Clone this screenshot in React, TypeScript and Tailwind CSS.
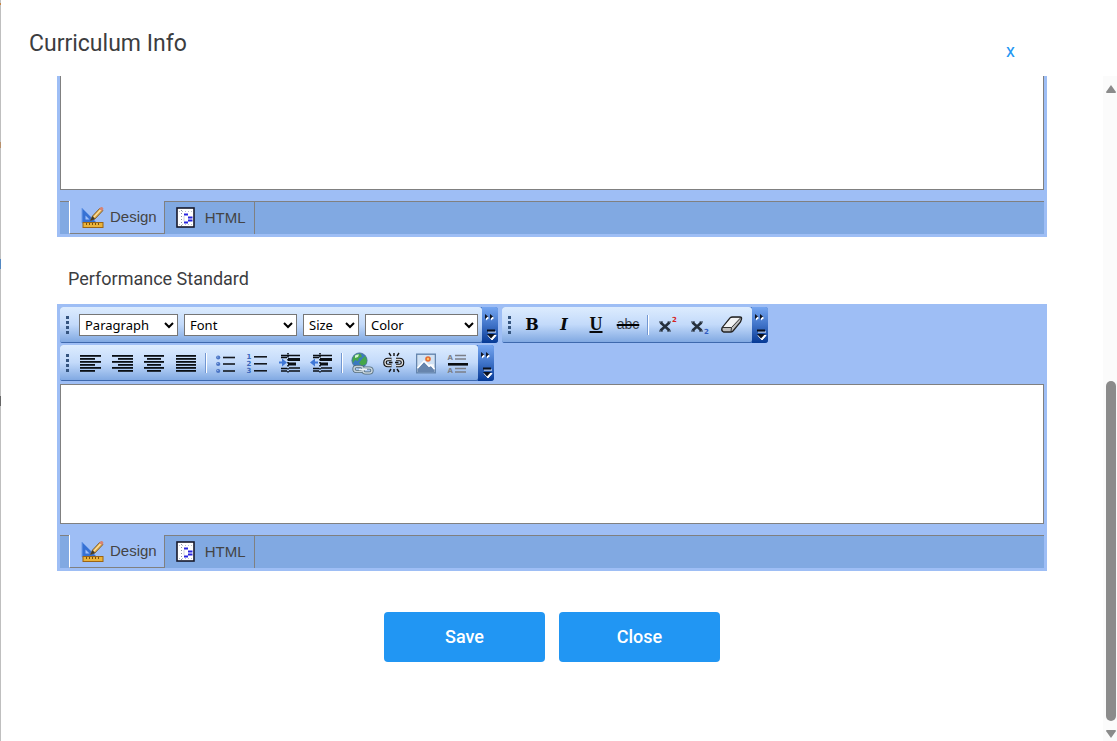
import { ReactNode } from 'react';

function Svg({ children, className = 'size-6' }: { children: ReactNode; className?: string }) {
  return (
    <svg viewBox="0 0 24 24" className={className} aria-hidden="true">
      {children}
    </svg>
  );
}

// x and width of each line, top to bottom
const alignLines: Record<string, number[][]> = {
  left: [[2, 21], [2, 15], [2, 21], [2, 15], [2, 21], [2, 15]],
  right: [[2, 21], [8, 15], [2, 21], [8, 15], [2, 21], [8, 15]],
  center: [[2, 20], [5, 14], [2, 20], [5, 14], [2, 20], [5, 14]],
  full: [[2, 20], [2, 20], [2, 20], [2, 20], [2, 20], [2, 20]],
};

function AlignIcon({ kind }: { kind: string }) {
  return (
    <Svg>
      {alignLines[kind].map(([x, w], i) => (
        <rect key={i} x={x} y={4 + i * 3} width={w} height={1.8} fill="#0a0f14" />
      ))}
    </Svg>
  );
}

function BulletIcon() {
  return (
    <Svg>
      {[6.5, 13, 20].map((y) => (
        <g key={y}>
          <circle cx="4.2" cy={y} r="2.1" fill="#4a74c4" />
          <circle cx="3.8" cy={y - 0.5} r="0.6" fill="#b8cff5" />
          <rect x="9" y={y - 0.8} width="12" height="1.6" fill="#15191f" />
        </g>
      ))}
    </Svg>
  );
}

function NumberIcon() {
  return (
    <Svg>
      {[5.5, 12.5, 19.5].map((y, i) => (
        <g key={y}>
          <text x="0.5" y={y + 2.5} fontFamily="DejaVu Sans" fontWeight="700" fontSize="7" fill="#3a66bb">
            {i + 1}
          </text>
          <rect x="8" y={y - 0.5} width="13" height="1.6" fill="#15191f" />
        </g>
      ))}
    </Svg>
  );
}

function IndentIcon({ out }: { out?: boolean }) {
  return (
    <Svg>
      <path d="M3 4.500H22M3 6.500H9M3 17.500H9M3 20H9M11 20H22M11 17H22" stroke="#0b0f14" strokeWidth="1.400" />
      <path d="M10 8.500H22M10 13H18" stroke="#0b0f14" strokeWidth="3" />
      <path d="M10 2V23" stroke="#0b0f14" strokeWidth="1.600" strokeDasharray="1.500 1.500" />
      {out ? (
        <path d="M0 11.500L5 7.500V10.500H8V12.500H5V15.500Z" fill="#3f77d6" />
      ) : (
        <path d="M9 11.500L4 7.500V10.500H1V12.500H4V15.500Z" fill="#3f77d6" />
      )}
    </Svg>
  );
}

function GlobeIcon() {
  return (
    <Svg>
      <circle cx="9.5" cy="9.5" r="7.6" fill="#3979bf" stroke="#456b8d" strokeWidth=".8" />
      <path d="M4 5Q7 2 11 3L12 6L9 7L8 10L5 9L3 12Q1.500 8 4 5ZM12 8L15 5Q18 9 16 13L12 15L9 12Z" fill="#45a64a" />
      <path d="M5 4.500Q7 3 9 3.500L8 6L5 7Z" fill="#d5f5d0" />
      <g fill="none" stroke="#526b79" strokeWidth="3.200">
        <rect x="4" y="15.500" width="9" height="5" rx="2.500" />
        <rect x="13" y="17" width="9" height="5" rx="2.500" />
      </g>
      <g fill="none" stroke="#c4d2dc" strokeWidth="1.500">
        <rect x="4" y="15.500" width="9" height="5" rx="2.500" />
        <rect x="13" y="17" width="9" height="5" rx="2.500" />
      </g>
      <path d="M9 18.500H17" stroke="#edf3f7" strokeWidth="1.500" />
    </Svg>
  );
}

function UnlinkIcon() {
  return (
    <Svg>
      <g fill="none" stroke="#111" strokeWidth="3.600">
        <path d="M9.500 8.500H6Q3 8.500 3 11.500T6 14.500H9.500M14 8.500H17.500Q20.500 8.500 20.500 11.500T17.500 14.500H14" />
      </g>
      <g fill="none" stroke="#ddd" strokeWidth="1.300">
        <path d="M9.500 8.500H6Q3 8.500 3 11.500T6 14.500H9.500M14 8.500H17.500Q20.500 8.500 20.500 11.500T17.500 14.500H14" />
      </g>
      <path
        d="M7 11.500H10.500M13 11.500H16.500M12 2V5M7 2L9 5M17 2L15 5M12 18V21M7 21L9 18M17 21L15 18"
        stroke="#111"
        strokeWidth="1.400"
      />
    </Svg>
  );
}

function ImageIcon() {
  return (
    <Svg>
      <rect x="2.700" y="3.200" width="18.600" height="18.600" fill="#edf4fb" stroke="#6485ae" strokeWidth="1.400" />
      <path d="M4 4H20V13L4 15Z" fill="#d0e2f5" />
      <path d="M3.500 21V18L10 11L15 16L17 15L20.500 19V21Z" fill="#6785ad" />
      <path d="M3.500 17L10 10L15 15L17 14L20.500 18" fill="none" stroke="#fff" strokeWidth="1.500" />
      <circle cx="14" cy="8" r="2.800" fill="#e56b34" />
      <circle cx="14" cy="8" r="1.200" fill="#ffc361" />
    </Svg>
  );
}

function RuleIcon() {
  return (
    <Svg>
      <rect x="2" y="12" width="20" height="2.600" fill="#0a0d10" />
      {[9, 22].map((y) => (
        <g key={y}>
          <text x="1.500" y={y} fontFamily="DejaVu Sans" fontWeight="700" fontSize="7" fill="#7b7f88">
            A
          </text>
          <path d={`M9 ${y - 4.5}H20M9 ${y - 1}H20`} stroke="#7b7f88" strokeWidth="1.400" />
        </g>
      ))}
    </Svg>
  );
}

function ScriptIcon({ sub }: { sub?: boolean }) {
  return (
    <Svg>
      <path d="M4.500 9.500L13.500 17.500M13.500 9.500L4.500 17.500" fill="none" stroke="#26303c" strokeWidth="2.600" />
      <path d="M3 9H7M11.500 9H15M3 18H7M11 18H15" stroke="#26303c" strokeWidth="1.200" />
      <text
        x="16"
        y={sub ? 21 : 9}
        fontFamily="DejaVu Sans"
        fontWeight="700"
        fontSize="7"
        fill={sub ? '#315bc0' : '#d52222'}
      >
        2
      </text>
    </Svg>
  );
}

function EraserIcon() {
  return (
    <Svg>
      <path d="M2 15L10 5Q11 4 12.500 4H20Q22 4 21.500 6L20.500 9L13 18Q12 19 10.500 19H3.500Q1 18 2 15Z" fill="#bcbcbc" stroke="#222" strokeWidth="1.300" />
      <path d="M3 14.500L11 5H20L12 14.500Z" fill="#f2f3f4" />
      <path d="M2.500 14.500H11.500L20.500 5M11.500 14.500L11 18.500" fill="none" stroke="#333" strokeWidth="1" />
    </Svg>
  );
}

function DesignIcon() {
  return (
    <Svg>
      <path d="M1 3V18H16Z" fill="#3671d4" stroke="#6c9be8" strokeWidth="1" />
      <path d="M4.500 10.500V14.500H8.500Z" fill="#9fc0fa" />
      <path d="M9.500 15.500L11.500 11L19 3L22 5.500L14 14Z" fill="#dba648" stroke="#705326" strokeWidth=".8" />
      <path d="M13 12L20 4.500" stroke="#ffe29b" strokeWidth="1.300" />
      <path d="M18 4L20 2Q22 1.500 22.500 4L21 6Z" fill="#d78373" />
      <path d="M9.500 15.500L11.500 11L14 14Z" fill="#3c382b" />
      <rect x="2" y="17.500" width="20" height="5" fill="#eab33b" stroke="#9a6415" />
      <path d="M5.500 18V20M8.500 18V20M11.500 18V20M14.500 18V20M17.500 18V20" stroke="#78500e" />
    </Svg>
  );
}

function HtmlIcon() {
  return (
    <Svg>
      <rect x="1" y="2" width="17" height="19" fill="#fff" stroke="#16182b" strokeWidth="1.600" />
      <path d="M5.500 4V20" stroke="#8992a5" strokeDasharray="1 2" />
      <path d="M3 5.500H16M3 18.500H16" stroke="#b8c0ce" strokeDasharray="1 2" />
      <path d="M8 8.500H12M12 11.500H16.500M12 14.500H16.500M8 16.500H12" stroke="#2825de" strokeWidth="1.800" />
      <path d="M8 10.500V15" stroke="#9ca4c5" strokeDasharray="1 1" />
    </Svg>
  );
}

function Grip() {
  return (
    <div className="flex w-[14px] shrink-0 flex-col items-center gap-[2px]" aria-hidden="true">
      {[0, 1, 2, 3].map((i) => (
        <span key={i} className="size-[3px] bg-[#35557f]" />
      ))}
    </div>
  );
}

function Separator() {
  return <span className="mx-[3px] h-5 w-[2px] border-l border-[#7297d2] bg-white" />;
}

function ToolButton({ label, children }: { label: string; children: ReactNode }) {
  return (
    <button
      type="button"
      aria-label={label}
      className="flex h-8 w-8 shrink-0 items-center justify-center text-[#07090c]"
    >
      {children}
    </button>
  );
}

function Toolbar({ children }: { children: ReactNode }) {
  return (
    <div className="flex h-9 overflow-hidden rounded-[3px] bg-[#3f73c8]">
      <div className="flex items-center rounded-r-[3px] border-b border-[#3e69ad] bg-linear-to-b from-[#ddecfe] via-[#c3dafa] to-[#81a9e2] pr-1">
        <Grip />
        {children}
      </div>
      <button
        type="button"
        aria-label="More tools"
        className="w-4 bg-linear-to-b from-[#75a6f1] via-[#3f73c8] to-[#053995]"
      >
        <svg viewBox="0 0 16 36" className="h-9 w-4" aria-hidden="true">
          <path d="M4 8.500L7 11L4 13.500ZM9 8.500L12 11L9 13.500Z" fill="#fff" />
          <path d="M3 7L6 9.500L3 12ZM8 7L11 9.500L8 12Z" fill="#101522" />
          <path d="M6 25H14M6 28.500H14L10 33Z" stroke="#fff" strokeWidth="1" fill="#fff" />
          <path d="M5 23.500H13" stroke="#0b101c" strokeWidth="2" />
          <path d="M5 27H13L9 31.500Z" fill="#0b101c" />
        </svg>
      </button>
    </div>
  );
}

const selects = [
  { name: 'Paragraph', className: 'w-[99px]' },
  { name: 'Font', className: 'w-[113px]' },
  { name: 'Size', className: 'w-[56px]' },
  { name: 'Color', className: 'w-[113px]' },
];

function EditorTools() {
  return (
    <div className="mb-[3px] flex flex-wrap gap-x-1 gap-y-[2px]">
      <Toolbar>
        <div className="flex gap-[6px] pl-[5px]">
          {selects.map((s) => (
            <select
              key={s.name}
              aria-label={s.name}
              className={`h-[22px] border border-[#767676] bg-white px-px font-['Noto_Sans'] text-[13px] text-black ${s.className}`}
            >
              <option>{s.name}</option>
            </select>
          ))}
        </div>
      </Toolbar>
      <Toolbar>
        <ToolButton label="Bold">
          <b className="font-['DejaVu_Serif'] text-[16px]">B</b>
        </ToolButton>
        <ToolButton label="Italic">
          <i className="font-['DejaVu_Serif'] text-[16px] font-bold">I</i>
        </ToolButton>
        <ToolButton label="Underline">
          <u className="font-['Liberation_Serif'] text-[18px] font-bold decoration-2">U</u>
        </ToolButton>
        <ToolButton label="Strikethrough">
          <s className="font-['Liberation_Sans'] text-[14px] text-[#39424c] decoration-black decoration-2">abc</s>
        </ToolButton>
        <Separator />
        <ToolButton label="Superscript">
          <ScriptIcon />
        </ToolButton>
        <ToolButton label="Subscript">
          <ScriptIcon sub />
        </ToolButton>
        <ToolButton label="Remove formatting">
          <EraserIcon />
        </ToolButton>
      </Toolbar>
      <div className="basis-full">
        <div className="flex">
          <Toolbar>
            <ToolButton label="Align left"><AlignIcon kind="left" /></ToolButton>
            <ToolButton label="Align right"><AlignIcon kind="right" /></ToolButton>
            <ToolButton label="Align center"><AlignIcon kind="center" /></ToolButton>
            <ToolButton label="Justify"><AlignIcon kind="full" /></ToolButton>
            <Separator />
            <ToolButton label="Bulleted list"><BulletIcon /></ToolButton>
            <ToolButton label="Numbered list"><NumberIcon /></ToolButton>
            <ToolButton label="Indent"><IndentIcon /></ToolButton>
            <ToolButton label="Outdent"><IndentIcon out /></ToolButton>
            <Separator />
            <ToolButton label="Insert link"><GlobeIcon /></ToolButton>
            <ToolButton label="Remove link"><UnlinkIcon /></ToolButton>
            <ToolButton label="Insert image"><ImageIcon /></ToolButton>
            <ToolButton label="Insert rule"><RuleIcon /></ToolButton>
          </Toolbar>
        </div>
      </div>
    </div>
  );
}

function EditorTabs() {
  return (
    <div
      role="tablist"
      className="mt-[11px] flex h-[33px] border-t border-[#808080] bg-[#81a9e2] pl-[9px] font-['Liberation_Sans'] text-[15px] text-[#444]"
    >
      <button
        type="button"
        role="tab"
        aria-selected="true"
        className="-mt-px flex items-center gap-[5px] border-r border-b border-l border-r-[#808080] border-b-[#808080] border-l-white bg-[#9ebef5] pr-[7px] pl-[11px]"
      >
        <DesignIcon />
        Design
      </button>
      <button
        type="button"
        role="tab"
        aria-selected="false"
        className="flex items-center gap-[5px] border-r border-[#808080] pr-2 pl-[11px]"
      >
        <HtmlIcon />
        HTML
      </button>
    </div>
  );
}

export default function App() {
  return (
    <div className="flex min-h-screen bg-white font-['Roboto',sans-serif] text-[#3c3d3f]">
      {/* sliver of the page behind the dialog */}
      <div className="flex w-px shrink-0 flex-col bg-[#bfbfbf]" aria-hidden="true">
        <span className="mt-[3px] h-[2px] bg-[#c58544]" />
        <span className="mt-[137px] h-[6px] bg-[#b8906c]" />
        <span className="mt-[111px] h-[10px] bg-[#5488c2]" />
        <span className="mt-[127px] h-[10px] bg-[#666]" />
      </div>
      <div role="dialog" aria-labelledby="dialog-title" className="flex min-w-0 flex-1 flex-col">
        <header className="flex h-[76px] shrink-0 items-start justify-between pt-7 pr-[102px] pl-7">
          <h1 id="dialog-title" className="text-[23px] leading-8">
            Curriculum Info
          </h1>
          <button type="button" className="mt-2 text-[18px] leading-[30px] text-[#2196f3]">
            x
          </button>
        </header>
        <div className="flex flex-1">
          <main className="min-w-0 flex-1 px-14">
            <section className="bg-[#9ebef5] px-[3px] pb-[3px]">
              <textarea
                aria-label="Content Standard"
                className="block h-[114px] w-full resize-none border border-t-0 border-[#808080] bg-white"
              />
              <EditorTabs />
            </section>
            <label htmlFor="performance" className="block px-[11px] pt-[30px] pb-[13px] text-[18px] leading-6">
              Performance Standard
            </label>
            <section className="bg-[#9ebef5] p-[3px]">
              <EditorTools />
              <textarea
                id="performance"
                className="block h-[140px] w-full resize-none border border-[#808080] bg-white"
              />
              <EditorTabs />
            </section>
            <div className="mt-[41px] flex justify-center gap-[14px] text-[18px] font-medium text-white">
              <button type="button" className="h-[50px] w-[161px] rounded bg-[#2196f3] pb-[2px]">
                Save
              </button>
              <button type="button" className="h-[50px] w-[161px] rounded bg-[#2196f3] pb-[2px]">
                Close
              </button>
            </div>
          </main>
          <div className="flex w-[14px] shrink-0 flex-col items-end bg-[#fbfbfb] py-[3px] pr-px" aria-hidden="true">
            <svg viewBox="0 0 10 8" className="mt-[6px] h-2 w-[10px]">
              <path d="M5 0L10 7Q10 8 9 8H1Q0 8 0 7Z" fill="#8b8b8b" />
            </svg>
            <div className="mt-auto h-[340px] w-[10px] rounded-full bg-[#8b8b8b]" />
            <svg viewBox="0 0 10 8" className="mt-[9px] h-2 w-[10px]">
              <path d="M5 8L10 1Q10 0 9 0H1Q0 0 0 1Z" fill="#8b8b8b" />
            </svg>
          </div>
        </div>
      </div>
    </div>
  );
}
